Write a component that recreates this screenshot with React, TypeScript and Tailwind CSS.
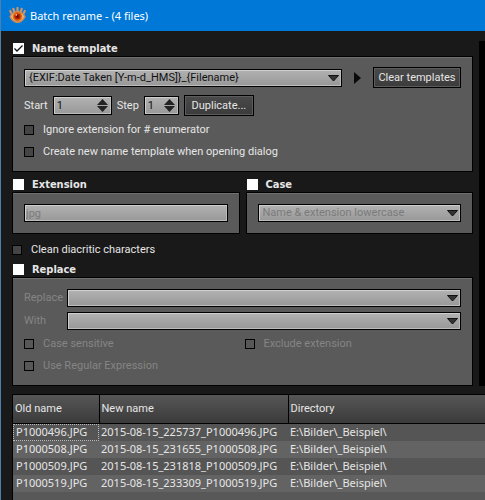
import React, { useState } from 'react';
import clsx from 'clsx';

interface FileRow {
    oldName: string;
    newName: string;
    directory: string;
}

const files: FileRow[] = [
    { oldName: 'P1000496.JPG', newName: '2015-08-15_225737_P1000496.JPG', directory: 'E:\\Bilder\\_Beispiel\\' },
    { oldName: 'P1000508.JPG', newName: '2015-08-15_231655_P1000508.JPG', directory: 'E:\\Bilder\\_Beispiel\\' },
    { oldName: 'P1000509.JPG', newName: '2015-08-15_231818_P1000509.JPG', directory: 'E:\\Bilder\\_Beispiel\\' },
    { oldName: 'P1000519.JPG', newName: '2015-08-15_233309_P1000519.JPG', directory: 'E:\\Bilder\\_Beispiel\\' },
];

const field = 'border border-black bg-linear-to-b from-[#b2b2b2] to-[#989898] shadow-[inset_1px_1px_0_#cfcfcf,inset_-1px_-1px_0_#bcbcbc] outline-none';

function AppIcon() {
    return (
        <svg width="17" height="17" viewBox="0 0 17 17" aria-hidden="true">
            <path d="M2.5 6.5 1.2 4M5.3 4.5 4.3 1.8M8.5 4V1M11.7 4.500 12.700 1.800M14.500 6.500 15.800 4" stroke="#cf9468" strokeWidth="2.200" strokeLinecap="round" />
            <path d="M.3 9.500C2 6 5 4 8.500 4S15 6 16.700 9.500C15 13.500 12 16 8.500 16S2 13.500.3 9.500Z" fill="#c98a5c" />
            <path d="M1.800 9.500C3.500 7 5.500 5.500 8.500 5.500S13.500 7 15.200 9.500C13.500 12.500 11.500 14 8.500 14S3.500 12.500 1.800 9.500Z" fill="#f0b070" />
            <circle cx="8.500" cy="9.500" r="4.600" fill="#e0680c" />
            <circle cx="8.500" cy="9.500" r="3" fill="#b51f08" />
            <circle cx="8.500" cy="9.500" r="1.400" fill="#6e0d04" />
            <circle cx="7.300" cy="7.800" r=".9" fill="#f6c9a4" />
        </svg>
    );
}

interface CheckProps {
    label: string;
    disabled?: boolean;
}

function Check({ label, disabled }: CheckProps) {
    return (
        <label className={clsx('flex h-4 items-center gap-[9px]', disabled && 'text-[#858585]')}>
            <input
                type="checkbox"
                disabled={disabled}
                className={clsx(
                    'size-[10px] appearance-none border border-black checked:bg-[#bbb]',
                    disabled ? 'bg-[#575757]' : 'bg-[#444]'
                )}
            />
            {label}
        </label>
    );
}

interface SectionProps {
    title: string;
    defaultChecked?: boolean;
    className?: string;
    children: React.ReactNode;
}

function Section({ title, defaultChecked = false, className, children }: SectionProps) {
    const [checked, setChecked] = useState(defaultChecked);

    return (
        <section>
            <label className="flex h-[15px] items-center gap-2 pl-px font-['DejaVu_Sans_Condensed','DejaVu_Sans',sans-serif] text-[11px] font-bold">
                <span className="relative size-[11px] bg-white">
                    <input
                        type="checkbox"
                        checked={checked}
                        onChange={(e) => setChecked(e.target.checked)}
                        className="block size-full appearance-none"
                    />
                    {checked && (
                        <svg className="pointer-events-none absolute inset-0" width="11" height="11" viewBox="0 0 11 11">
                            <path d="M1.500 5.500 4 8 9.500 2.500" fill="none" stroke="#111" strokeWidth="1.300" />
                        </svg>
                    )}
                </span>
                {title}
            </label>
            <div className={clsx('border border-black bg-[#5a5a5a] px-[11px] shadow-[inset_0_1px_0_#707070]', className)}>
                {children}
            </div>
        </section>
    );
}

interface ComboProps {
    id?: string;
    label?: string;
    value?: string;
    disabled?: boolean;
}

function Combo({ id, label, value = '', disabled }: ComboProps) {
    return (
        <div className="relative min-w-0 flex-1">
            <select
                id={id}
                aria-label={label}
                disabled={disabled}
                className={clsx(
                    'block h-[18px] w-full appearance-none pl-1 leading-4 disabled:opacity-100',
                    field,
                    disabled ? 'text-[#7b7b7b]' : 'text-[#111]'
                )}
            >
                <option>{value}</option>
            </select>
            <svg className="pointer-events-none absolute top-[6px] right-[3px]" width="11" height="7" viewBox="0 0 11 7">
                <path d="M.5.5h10L5.500 6Z" fill="#333" stroke="#111" />
            </svg>
        </div>
    );
}

function Spinner({ id, label, className }: { id: string; label: string; className: string }) {
    const [value, setValue] = useState(1);

    return (
        <>
            <label htmlFor={id}>{label}</label>
            <div className={clsx('flex h-[19px] items-center', field, className)}>
                <input
                    id={id}
                    type="number"
                    value={value}
                    onChange={(e) => setValue(parseInt(e.target.value) || 1)}
                    className="w-0 flex-1 [appearance:textfield] bg-transparent pl-[3px] text-[#111] outline-none [&::-webkit-inner-spin-button]:appearance-none"
                />
                <div className="mr-[3px] flex flex-col gap-px">
                    <button type="button" aria-label={label + ' up'} onClick={() => setValue(value + 1)}>
                        <svg className="block" width="11" height="6" viewBox="0 0 11 6"><path d="M0 6h11L5.500 0Z" fill="#222" /></svg>
                    </button>
                    <button type="button" aria-label={label + ' down'} onClick={() => setValue(value - 1)}>
                        <svg className="block" width="11" height="6" viewBox="0 0 11 6"><path d="M0 0h11L5.500 6Z" fill="#222" /></svg>
                    </button>
                </div>
            </div>
        </>
    );
}

function PushButton({ children, className }: { children: React.ReactNode; className: string }) {
    return (
        <button
            type="button"
            className={clsx('h-[21px] border border-black bg-linear-to-b from-[#4a4a4a] to-[#3b3b3b] leading-4 whitespace-nowrap shadow-[inset_0_0_0_1px_#5c5c5c]', className)}
        >
            {children}
        </button>
    );
}

export default function App() {
    return (
        <div className="flex min-h-screen flex-col border-l border-[#4a7fb0] bg-[#191919] font-[Roboto,'Noto_Sans',sans-serif] text-[11px] leading-4 text-[#e6e6e6]">
            <header className="flex h-[31px] items-center gap-1 bg-[#0078d7] pl-2 text-white">
                <AppIcon />
                <h1 className="font-['Noto_Sans',sans-serif] text-[11px]">Batch rename - (4 files)</h1>
            </header>

            <div className="flex pt-[10px]">
                <main className="min-w-0 flex-1 pr-[6px] pl-[11px]">
                    <Section title="Name template" defaultChecked className="h-[116px] pt-[10px]">
                        <div className="flex items-center">
                            <Combo label="Name template" value="{EXIF:Date Taken [Y-m-d_HMS]}_{Filename}" />
                            <button type="button" aria-label="Insert" className="mx-3">
                                <svg className="block" width="7" height="12" viewBox="0 0 7 12"><path d="M0 0v12l7-6Z" fill="#0a0a0a" /></svg>
                            </button>
                            <PushButton className="w-[88px]">Clear templates</PushButton>
                        </div>
                        <div className="mt-[7px] flex items-center gap-[5px]">
                            <Spinner id="start" label="Start" className="w-[59px]" />
                            <Spinner id="step" label="Step" className="w-[35px]" />
                            <PushButton className="w-[70px]">Duplicate...</PushButton>
                        </div>
                        <div className="mt-[6px] flex flex-col gap-[6px]">
                            <Check label="Ignore extension for # enumerator" />
                            <Check label="Create new name template when opening dialog" />
                        </div>
                    </Section>

                    <div className="mt-[5px] grid grid-cols-2 gap-[6px]">
                        <Section title="Extension" className="h-[42px] pt-[11px]">
                            <input
                                aria-label="Extension"
                                defaultValue="jpg"
                                disabled
                                className={clsx('block h-[18px] w-full pl-px text-[#7b7b7b]', field)}
                            />
                        </Section>
                        <Section title="Case" className="h-[42px] pt-[11px]">
                            <Combo label="Case" value="Name &amp; extension lowercase" disabled />
                        </Section>
                    </div>

                    <div className="mt-2 mb-1">
                        <Check label="Clean diacritic characters" />
                    </div>

                    <Section title="Replace" className="h-[109px] pt-[11px] text-[#858585]">
                        <div className="flex items-center">
                            <label htmlFor="replace" className="w-[43px]">Replace</label>
                            <Combo id="replace" disabled />
                        </div>
                        <div className="mt-[5px] flex items-center">
                            <label htmlFor="with" className="w-[43px]">With</label>
                            <Combo id="with" disabled />
                        </div>
                        <div className="mt-[6px] grid grid-cols-2 gap-x-1 gap-y-[6px]">
                            <Check label="Case sensitive" disabled />
                            <Check label="Exclude extension" disabled />
                            <Check label="Use Regular Expression" disabled />
                        </div>
                    </Section>
                </main>
                <div className="w-[6px] bg-black" />
            </div>

            <div className="mt-2 ml-[11px] flex-1 border-l border-black bg-[#585858]">
                <table className="w-full table-fixed border-collapse text-left">
                    <thead className="bg-linear-to-b from-[#565656] to-[#3a3a3a]">
                        <tr className="h-[29px] border-y border-black">
                            <th className="w-[86px] border-r border-black pl-[2px] font-normal">Old name</th>
                            <th className="w-[189px] border-r border-black pl-[2px] font-normal">New name</th>
                            <th className="pl-[2px] font-normal">Directory</th>
                        </tr>
                    </thead>
                    <tbody className="font-['Noto_Sans',sans-serif] whitespace-nowrap">
                        {files.map((file, index) => (
                            <tr key={file.oldName} className={clsx('h-[17px]', index % 2 ? 'bg-[#636363]' : 'bg-[#555]')}>
                                <td className={clsx('pl-[3px] leading-4', index === 0 && 'outline-1 -outline-offset-1 outline-dotted outline-[#bbb]')}>
                                    {file.oldName}
                                </td>
                                <td className="pl-[2px] leading-4">{file.newName}</td>
                                <td className="pl-[2px] leading-4">{file.directory}</td>
                            </tr>
                        ))}
                    </tbody>
                </table>
            </div>
        </div>
    );
}
